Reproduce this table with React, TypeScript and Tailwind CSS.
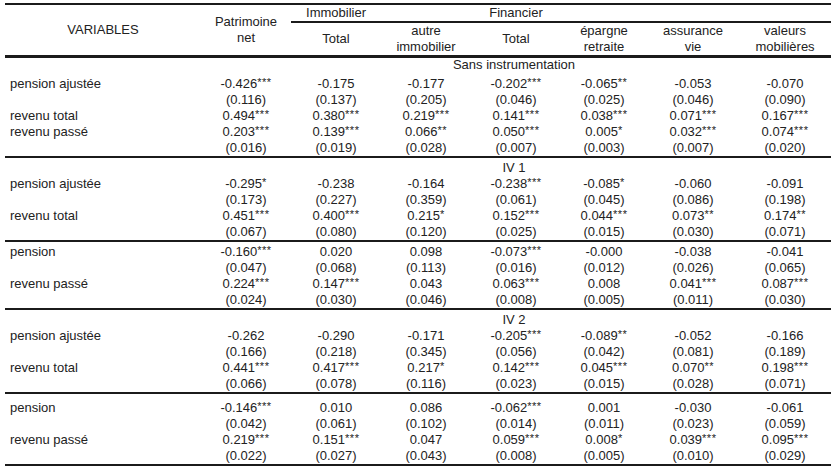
import React from 'react';

const COLS = 'grid grid-cols-[196px_90px_90px_90px_90px_86px_92px_92px]';

type Row = { label: string; cells: string[] };
type Block = { gap: string; rows: Row[] };
type Section = { title: string; titleClass: string; blocks: Block[] };

const SECTIONS: Section[] = [
  {
    title: 'Sans instrumentation',
    titleClass: 'h-[14px] leading-[14px] mb-[4px]',
    blocks: [
      {
        gap: '',
        rows: [
          { label: 'pension ajustée', cells: ['-0.426***', '-0.175', '-0.177', '-0.202***', '-0.065**', '-0.053', '-0.070'] },
          { label: '', cells: ['(0.116)', '(0.137)', '(0.205)', '(0.046)', '(0.025)', '(0.046)', '(0.090)'] },
          { label: 'revenu total', cells: ['0.494***', '0.380***', '0.219***', '0.141***', '0.038***', '0.071***', '0.167***'] },
          { label: 'revenu passé', cells: ['0.203***', '0.139***', '0.066**', '0.050***', '0.005*', '0.032***', '0.074***'] },
          { label: '', cells: ['(0.016)', '(0.019)', '(0.028)', '(0.007)', '(0.003)', '(0.007)', '(0.020)'] },
        ],
      },
    ],
  },
  {
    title: 'IV 1',
    titleClass: 'h-4 leading-4 mt-[2px]',
    blocks: [
      {
        gap: '',
        rows: [
          { label: 'pension ajustée', cells: ['-0.295*', '-0.238', '-0.164', '-0.238***', '-0.085*', '-0.060', '-0.091'] },
          { label: '', cells: ['(0.173)', '(0.227)', '(0.359)', '(0.061)', '(0.045)', '(0.086)', '(0.198)'] },
          { label: 'revenu total', cells: ['0.451***', '0.400***', '0.215*', '0.152***', '0.044***', '0.073**', '0.174**'] },
          { label: '', cells: ['(0.067)', '(0.080)', '(0.120)', '(0.025)', '(0.015)', '(0.030)', '(0.071)'] },
        ],
      },
      {
        gap: 'mt-[2px]',
        rows: [
          { label: 'pension', cells: ['-0.160***', '0.020', '0.098', '-0.073***', '-0.000', '-0.038', '-0.041'] },
          { label: '', cells: ['(0.047)', '(0.068)', '(0.113)', '(0.016)', '(0.012)', '(0.026)', '(0.065)'] },
          { label: 'revenu passé', cells: ['0.224***', '0.147***', '0.043', '0.063***', '0.008', '0.041***', '0.087***'] },
          { label: '', cells: ['(0.024)', '(0.030)', '(0.046)', '(0.008)', '(0.005)', '(0.011)', '(0.030)'] },
        ],
      },
    ],
  },
  {
    title: 'IV 2',
    titleClass: 'h-4 leading-4 mt-[2px]',
    blocks: [
      {
        gap: '',
        rows: [
          { label: 'pension ajustée', cells: ['-0.262', '-0.290', '-0.171', '-0.205***', '-0.089**', '-0.052', '-0.166'] },
          { label: '', cells: ['(0.166)', '(0.218)', '(0.345)', '(0.056)', '(0.042)', '(0.081)', '(0.189)'] },
          { label: 'revenu total', cells: ['0.441***', '0.417***', '0.217*', '0.142***', '0.045***', '0.070**', '0.198***'] },
          { label: '', cells: ['(0.066)', '(0.078)', '(0.116)', '(0.023)', '(0.015)', '(0.028)', '(0.071)'] },
        ],
      },
      {
        gap: 'mt-[6px]',
        rows: [
          { label: 'pension', cells: ['-0.146***', '0.010', '0.086', '-0.062***', '0.001', '-0.030', '-0.061'] },
          { label: '', cells: ['(0.042)', '(0.061)', '(0.102)', '(0.014)', '(0.011)', '(0.023)', '(0.059)'] },
          { label: 'revenu passé', cells: ['0.219***', '0.151***', '0.047', '0.059***', '0.008*', '0.039***', '0.095***'] },
          { label: '', cells: ['(0.022)', '(0.027)', '(0.043)', '(0.008)', '(0.005)', '(0.010)', '(0.029)'] },
        ],
      },
    ],
  },
];

function Rule({ thick }: { thick?: boolean }) {
  return <div className={thick ? 'h-[3px] bg-[#1b1b1b]' : 'h-[2px] bg-[#1b1b1b]'} />;
}

// splits "0.494***" into the number and its significance stars
function Value({ v }: { v: string }) {
  const m = v.match(/^(.*?)(\*+)$/);
  if (!m) return <>{v}</>;
  return (
    <>
      {m[1]}
      <span className="text-[11px] align-top leading-[13px] tracking-[0.5px]">{m[2]}</span>
    </>
  );
}

function DataRow({ row }: { row: Row }) {
  return (
    <div className={`${COLS} h-4 leading-4`}>
      <div className="pl-[5px] whitespace-nowrap">{row.label}</div>
      {row.cells.map((c, i) => (
        <div key={i} className="text-center whitespace-nowrap">
          <Value v={c} />
        </div>
      ))}
    </div>
  );
}

export default function App() {
  return (
    <div className="w-[836px] h-[474px] bg-white overflow-hidden text-[#222] text-[13px] font-['Liberation_Sans',Arial,sans-serif]">
      <div className="ml-[5px] w-[826px] pt-[3px]">
        <Rule />

        {/* header */}
        <div className={`${COLS} grid-rows-[16px_2px_32px] leading-4`}>
          <div className="col-start-1 row-start-1 row-span-3 flex items-center justify-center">VARIABLES</div>
          <div className="col-start-2 row-start-1 row-span-3 flex items-center justify-center text-center">
            Patrimoine
            <br />
            net
          </div>
          <div className="col-start-3 row-start-1 text-center">Immobilier</div>
          <div className="col-start-5 row-start-1 text-center">Financier</div>
          <div className="col-start-3 col-span-6 row-start-2 bg-[#1b1b1b]" />
          <div className="col-start-3 row-start-3 flex items-center justify-center">Total</div>
          <div className="col-start-4 row-start-3 flex items-center justify-center text-center">
            autre
            <br />
            immobilier
          </div>
          <div className="col-start-5 row-start-3 flex items-center justify-center">Total</div>
          <div className="col-start-6 row-start-3 flex items-center justify-center text-center">
            épargne
            <br />
            retraite
          </div>
          <div className="col-start-7 row-start-3 flex items-center justify-center text-center">
            assurance
            <br />
            vie
          </div>
          <div className="col-start-8 row-start-3 flex items-center justify-center text-center">
            valeurs
            <br />
            mobilières
          </div>
        </div>
        <Rule thick />

        {SECTIONS.map((s) => (
          <div key={s.title}>
            <div className={`${COLS} ${s.titleClass}`}>
              <div className="col-start-4 col-span-3 text-center whitespace-nowrap">{s.title}</div>
            </div>
            {s.blocks.map((b, bi) => (
              <div key={bi} className={b.gap}>
                {b.rows.map((r, ri) => (
                  <DataRow key={ri} row={r} />
                ))}
                <Rule />
              </div>
            ))}
          </div>
        ))}
      </div>
    </div>
  );
}
